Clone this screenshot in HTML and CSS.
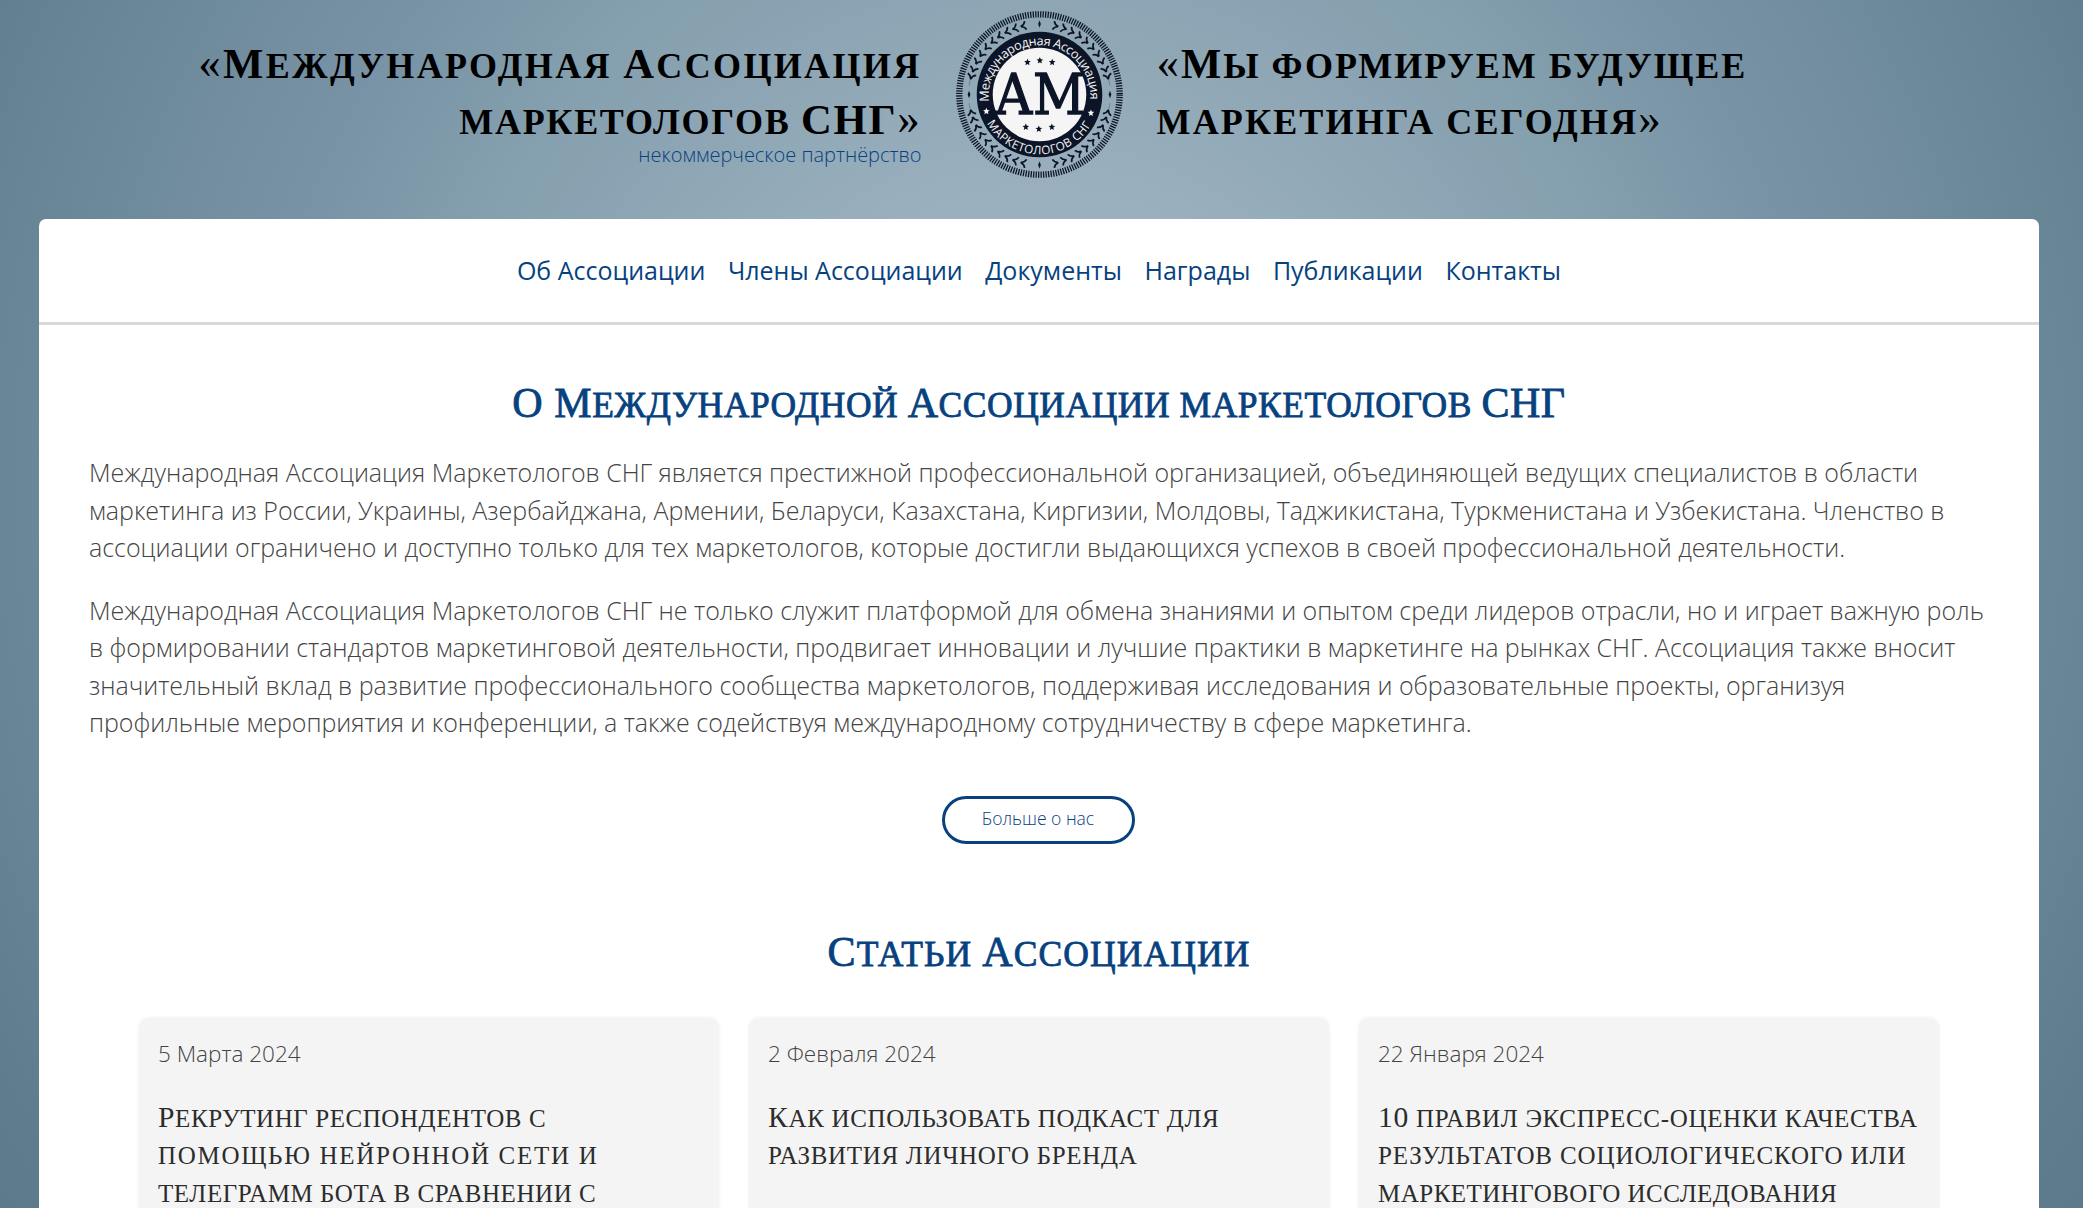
FILE: index.html
```
<!DOCTYPE html>
<html lang="ru">
<head>
<meta charset="utf-8">
<title>Международная Ассоциация маркетологов СНГ</title>
<link rel="stylesheet" href="styles.css">
</head>
<body>
<header class="header">
  <div class="brand">
    <div class="brand-line ls-a"><span class="quote">«</span><span class="cap">М</span>еждународная <span class="cap">А</span>ссоциация</div>
    <div class="brand-line ls-b">маркетологов <span class="cap">СНГ</span><span class="quote">»</span></div>
    <div class="brand-sub">некоммерческое партнёрство</div>
  </div>
  <svg class="logo" viewBox="-250 -250 500 500">
    <defs>
      <path id="leaf" d="M-6-13Q-3-3 9 0Q-3 3-6 13"/>
      <path id="star" d="M0-10 3-3.5 10-3 4.500 2 6 9.500 0 5.500-6 9.500-4.500 2-10-3-3-3.500Z"/>
      <path id="gem" d="M0-11 4 0 0 11-4 0Z"/>
      <path id="arc-top" d="M-151 22A152 152 0 1 1 151 22"/>
      <path id="arc-bottom" d="M-157 86A179 179 0 0 0 157 86"/>
      <g id="branch">
        <use href="#leaf" transform="rotate(13) translate(0 -211)"/>
        <use href="#leaf" transform="rotate(20) translate(0 -211)"/>
        <use href="#leaf" transform="rotate(27) translate(0 -211)"/>
        <use href="#leaf" transform="rotate(34) translate(0 -211)"/>
        <use href="#leaf" transform="rotate(41) translate(0 -211)"/>
        <use href="#leaf" transform="rotate(48) translate(0 -211)"/>
        <use href="#leaf" transform="rotate(55) translate(0 -211)"/>
        <use href="#leaf" transform="rotate(62) translate(0 -211)"/>
        <use href="#leaf" transform="rotate(69) translate(0 -211)"/>
        <use href="#leaf" transform="rotate(75) translate(0 -211)"/>
        <path class="stem" d="M204-54Q209-40 211-26"/>
      </g>
    </defs>
    <circle class="ticks" r="240"/>
    <g class="leaves">
      <use href="#branch"/>
      <use href="#branch" transform="scale(-1 1)"/>
      <use href="#branch" transform="scale(1 -1)"/>
      <use href="#branch" transform="scale(-1 -1)"/>
    </g>
    <g class="ink">
      <use href="#gem" y="-211"/><use href="#gem" y="211"/>
      <use href="#gem" x="-211"/><use href="#gem" x="211"/>
      <circle r="188"/>
    </g>
    <circle class="paper" r="140"/>
    <g class="ink">
      <use href="#star" x="-36" y="-97"/><use href="#star" x="1" y="-102"/><use href="#star" x="38" y="-97"/>
      <use href="#star" x="-41" y="97"/><use href="#star" x="-2" y="103"/><use href="#star" x="37" y="97"/>
    </g>
    <g class="paper">
      <use href="#star" x="-159" y="50"/><use href="#star" x="154" y="55"/>
    </g>
    <text class="monogram" x="-135" y="57" textLength="272" lengthAdjust="spacingAndGlyphs">АМ</text>
    <text class="ring-text"><textPath href="#arc-top" textLength="505">Международная Ассоциация</textPath></text>
    <text class="ring-text ring-caps"><textPath href="#arc-bottom" textLength="378">МАРКЕТОЛОГОВ СНГ</textPath></text>
  </svg>
  <div class="slogan">
    <div class="brand-line ls-c"><span class="quote">«</span><span class="cap">М</span>ы формируем будущее</div>
    <div class="brand-line ls-d">маркетинга сегодня<span class="quote">»</span></div>
  </div>
</header>
<main class="page">
  <nav class="nav">
    <a>Об Ассоциации</a><a>Члены Ассоциации</a><a>Документы</a><a>Награды</a><a>Публикации</a><a>Контакты</a>
  </nav>
  <section class="about">
    <h2 class="title ls-e"><span class="cap">О М</span>еждународной <span class="cap">А</span>ссоциации маркетологов <span class="cap">СНГ</span></h2>
    <p>Международная Ассоциация Маркетологов СНГ является престижной профессиональной организацией, объединяющей ведущих специалистов в области маркетинга из России, Украины, Азербайджана, Армении, Беларуси, Казахстана, Киргизии, Молдовы, Таджикистана, Туркменистана и Узбекистана. Членство в ассоциации ограничено и доступно только для тех маркетологов, которые достигли выдающихся успехов в своей профессиональной деятельности.</p>
    <p>Международная Ассоциация Маркетологов СНГ не только служит платформой для обмена знаниями и опытом среди лидеров отрасли, но и играет важную роль в формировании стандартов маркетинговой деятельности, продвигает инновации и лучшие практики в маркетинге на рынках СНГ. Ассоциация также вносит значительный вклад в развитие профессионального сообщества маркетологов, поддерживая исследования и образовательные проекты, организуя профильные мероприятия и конференции, а также содействуя международному сотрудничеству в сфере маркетинга.</p>
    <a class="more">Больше о нас</a>
  </section>
  <section class="articles">
    <h2 class="title ls-f"><span class="cap">С</span>татьи <span class="cap">А</span>ссоциации</h2>
    <div class="cards">
      <article class="card">
        <div class="date">5 Марта 2024</div>
        <h3 class="card-title">
          <span class="row ls-g"><span class="cap">Р</span>екрутинг респондентов с</span>
          <span class="row ls-h">помощью нейронной сети и</span>
          <span class="row ls-g">телеграмм бота в сравнении с</span>
        </h3>
      </article>
      <article class="card">
        <div class="date">2 Февраля 2024</div>
        <h3 class="card-title">
          <span class="row ls-i"><span class="cap">К</span>ак использовать подкаст для</span>
          <span class="row ls-i">развития личного бренда</span>
        </h3>
      </article>
      <article class="card">
        <div class="date">22 Января 2024</div>
        <h3 class="card-title">
          <span class="row ls-i"><span class="cap">10</span> правил экспресс-оценки качества</span>
          <span class="row ls-j">результатов социологического или</span>
          <span class="row ls-k">маркетингового исследования</span>
        </h3>
      </article>
    </div>
  </section>
</main>
</body>
</html>
```
FILE: styles.css
```
* { box-sizing: border-box; }

body {
  margin: 0;
  padding: 0 44px 0 39px;
  height: 1208px;
  overflow: hidden;
  font: 300 25px/37.5px "Open Sans", sans-serif;
  color: #444;
  background: radial-gradient(circle at 1040px 480px, #a5bac6 0, #99afbd 300px, #8ca4b3 500px, #829eac 640px, #7994a6 760px, #6b8899 1000px, #5e7c8d 1200px, #587587 1400px);
}

.header {
  height: 219px;
  display: grid;
  grid-template-columns: 1fr 167px 1fr;
  column-gap: 34px;
}

.brand, .slogan { padding-top: 38px; color: #000; }
.brand { text-align: right; }

.brand-line {
  font: 700 36px/56px "Liberation Serif", serif;
  text-transform: uppercase;
  white-space: nowrap;
}

.brand-sub {
  margin-top: -5px;
  font-size: 20px;
  line-height: 20px;
  color: #07427f;
}

.cap { font-size: 1.185em; line-height: 0; }
.quote { font-size: 1.25em; font-weight: 400; line-height: 0; }

.logo { width: 167px; height: 167px; margin-top: 11px; overflow: visible; }
.ink { fill: #0c1427; }
.paper { fill: #f5f5f5; }
.ticks { fill: none; stroke: #0c1427; stroke-width: 19; stroke-dasharray: 3.8 3.74; }
.leaves { fill: none; stroke: #0c1427; stroke-width: 5; }
.stem { stroke-width: 1.5; opacity: .5; }
.monogram { font: 400 167px "DejaVu Serif", serif; fill: #0c1427; stroke: #0c1427; stroke-width: 4; }
.ring-text { font: 400 38px "Open Sans", sans-serif; fill: #f5f5f5; }
.ring-caps { font-size: 35px; }

.page {
  height: 989px;
  overflow: hidden;
  background: #fff;
  border-radius: 7px 7px 0 0;
}

.nav {
  height: 106px;
  border-bottom: 3px solid #d8dad9;
  display: flex;
  justify-content: center;
  align-items: center;
  gap: 22.5px;
  font-weight: 400;
  color: #07427f;
}

.title {
  margin: 0;
  font: 400 35.5px/56px "Liberation Serif", serif;
  text-align: center;
  text-transform: uppercase;
  white-space: nowrap;
  color: #07427f;
  -webkit-text-stroke: .8px #07427f;
}

.about { padding: 52px 50px 0; }
.about .title { margin-bottom: 21px; }
.about p { margin: 0 0 25px; letter-spacing: -.025px; }

.more {
  display: block;
  width: 193px;
  height: 48px;
  margin: 54px auto 0;
  position: relative;
  left: -1px;
  border: 3px solid #07427f;
  border-radius: 24px;
  font-size: 17.5px;
  line-height: 39px;
  text-align: center;
  color: #07427f;
}

.articles { padding: 82px 100px 0; }

.cards {
  margin-top: 36px;
  display: grid;
  grid-template-columns: repeat(3, 1fr);
  gap: 30px;
}

.card {
  min-height: 189px;
  padding: 19px 19px 0;
  border-radius: 10px 10px 0 0;
  background: #f4f4f4;
  box-shadow: 0 0 4px #eee;
}

.date { font-size: 22.5px; line-height: 34px; }

.card-title {
  margin: 29px 0 0;
  font: 400 25px/37.5px "Liberation Serif", serif;
  text-transform: uppercase;
  color: #2c2c2c;
}

.row { display: block; white-space: nowrap; }

.ls-a { letter-spacing: 2.35px; }
.ls-b { letter-spacing: 1.7px; }
.ls-c { letter-spacing: 2px; }
.ls-d { letter-spacing: 2.15px; }
.ls-e { letter-spacing: .53px; }
.ls-f { letter-spacing: 1.1px; }
.ls-g { letter-spacing: .57px; }
.ls-h { letter-spacing: 1.7px; }
.ls-i { letter-spacing: .68px; }
.ls-j { letter-spacing: .88px; }
.ls-k { letter-spacing: .48px; }
```
